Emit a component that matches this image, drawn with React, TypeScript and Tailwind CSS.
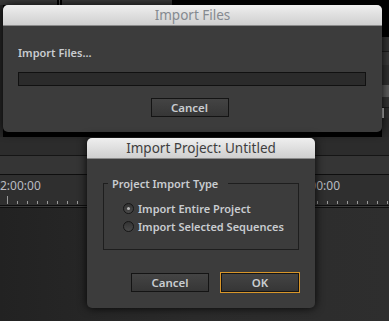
import type { ReactNode } from 'react'

function Button({ label, focused }: { label: string; focused?: boolean }) {
  const inner = (
    <div className="w-[78px] h-[19px] flex items-center justify-center border border-[#141414] bg-gradient-to-b from-[#444] to-[#363636] text-[11.5px] font-semibold text-[#c9ccd0]">
      {label}
    </div>
  )
  if (!focused) return inner
  return <div className="border border-[#d8962a] -m-px">{inner}</div>
}

function Radio({ checked, label }: { checked?: boolean; label: string }) {
  return (
    <div className="flex items-center gap-[4px] h-[18px]">
      <div className="w-[11px] h-[11px] rounded-full border border-[#161616] bg-gradient-to-b from-[#333] to-[#4a4a4a] flex items-center justify-center">
        {checked && <div className="w-[3px] h-[3px] rounded-full bg-[#b8b8b8]" />}
      </div>
      <span className="text-[11px] font-semibold text-[#c9ccd0] leading-none">{label}</span>
    </div>
  )
}

function Dialog({ title, active, children, className }: { title: string; active?: boolean; children: ReactNode; className: string }) {
  return (
    <div className={`absolute rounded-[5px] overflow-hidden bg-[#3c3c3c] shadow-[0_0_10px_rgba(0,0,0,0.9)] flex flex-col ${className}`}>
      <div
        className={`h-[21px] shrink-0 flex items-center justify-center text-[13.5px] border-b border-[#8a8a8a] bg-gradient-to-b from-[#efefef] to-[#cfcfcf] ${
          active ? 'text-[#3e3e3e]' : 'text-[#858a90]'
        }`}
      >
        {title}
      </div>
      {children}
    </div>
  )
}

function Ruler() {
  const ticks = Array.from({ length: 39 }, (_, i) => 7 + i * 10)
  return (
    <svg width="389" height="8" className="block">
      {ticks.map((x, i) => (
        <line key={x} x1={x + 0.5} x2={x + 0.5} y1={i === 0 ? 0 : 5} y2={8} stroke="#9a9a9a" strokeWidth="1" />
      ))}
    </svg>
  )
}

export default function App() {
  return (
    <div className="relative w-[389px] h-[321px] overflow-hidden bg-black font-['Noto_Sans',sans-serif]">
      {/* backdrop: panels behind the dialogs */}
      <div className="flex flex-col h-full">
        <div className="h-[137px] flex">
          <div className="w-[3px] flex flex-col">
            <div className="h-[5px] bg-[#3a3a3a]" />
            <div className="flex-1 bg-[#262626]" />
          </div>
          <div className="flex-1 flex flex-col">
            <div className="h-[5px] flex">
              <div className="w-[54px] bg-[#3c3c3c]" />
              <div className="w-[5px] flex justify-center">
                <div className="w-px bg-[#555]" />
              </div>
              <div className="w-[110px] bg-[#3c3c3c]" />
            </div>
          </div>
          <div className="w-[7px] flex flex-col">
            <div className="h-[37px]" />
            <div className="h-[15px] bg-[#333] border-b border-[#1c1c1c]" />
            <div className="h-[13px] bg-[#3a3a3a]" />
            <div className="h-[20px] bg-[#303030]" />
            <div className="h-[12px] bg-[#5c5c5c]" />
            <div className="h-[11px] bg-[#333] border-b border-[#1c1c1c]" />
            <div className="h-[10px] bg-[#2e2e2e] border-l-2 border-[#bbb]" />
            <div className="flex-1 bg-[#2a2a2a]" />
          </div>
        </div>
        <div className="h-[19px] bg-[#2c2c2c] border-b border-[#151515]" />
        <div className="h-[19px] bg-[#353535] border-b border-[#0e0e0e]" />
        <div className="h-[30px] bg-[#2f2f2f] flex flex-col">
          <div className="h-[21px] flex items-center justify-between text-[12px] text-[#b9bcc2] leading-none">
            <span>2:00:00</span>
            <span className="mr-[49px]">04:00:00</span>
          </div>
          <Ruler />
        </div>
        <div className="h-[3px] border-y border-[#0e0e0e] bg-[#3a3a3a]" />
        <div className="flex-1 bg-gradient-to-r from-[#222] via-[#2b2b2b] to-[#2e2e2e]" />
      </div>

      <Dialog title="Import Files" className="left-[3px] top-[5px] w-[379px] h-[127px]">
        <div className="flex flex-col px-[15px] pt-[21px]">
          <div className="text-[11px] font-semibold text-[#c9ccd0] leading-none">Import Files...</div>
          <div className="mt-[14px] h-[14px] w-[348px] bg-[#2b2b2b] border border-[#111]" />
          <div className="mt-[12px] flex justify-center pr-[6px]">
            <Button label="Cancel" />
          </div>
        </div>
      </Dialog>

      <Dialog title="Import Project: Untitled" active className="left-[87px] top-[138px] w-[228px] h-[170px] bg-[#3a3a3a]">
        <div className="flex flex-col px-[16px] pt-[19px]">
          <fieldset className="w-[196px] h-[72px] border border-[#1e1e1e]">
            <legend className="ml-[4px] px-[4px] pr-[10px] text-[11px] font-semibold text-[#c9ccd0] leading-none">
              Project Import Type
            </legend>
            <div className="flex flex-col mt-[10px] pl-[19px]">
              <Radio checked label="Import Entire Project" />
              <Radio label="Import Selected Sequences" />
            </div>
          </fieldset>
          <div className="mt-[23px] flex gap-[12px] pl-[28px]">
            <Button label="Cancel" />
            <Button label="OK" focused />
          </div>
        </div>
      </Dialog>
    </div>
  )
}
